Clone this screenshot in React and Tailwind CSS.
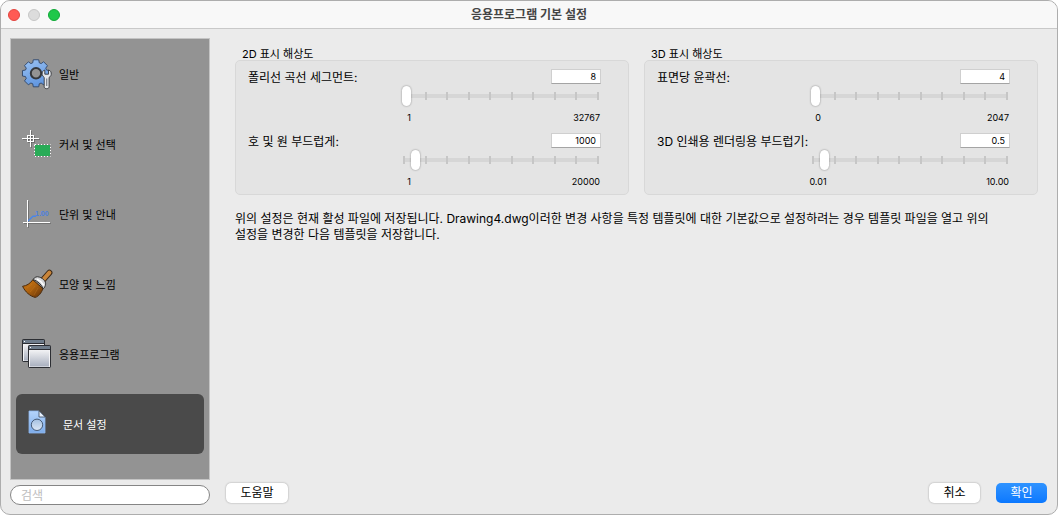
import React, { useState } from 'react'
import clsx from 'clsx'

// Path roda gigi dengan 8 gigi
function gearPath(cx, cy, root, tip) {
  const pts = []
  for (let i = 0; i < 8; i++) {
    const base = (i * Math.PI) / 4 - Math.PI / 2
    const corners = [[-0.3, root], [-0.2, tip], [0.2, tip], [0.3, root]]
    corners.forEach(([d, r]) => {
      pts.push(`${(cx + r * Math.cos(base + d)).toFixed(2)} ${(cy + r * Math.sin(base + d)).toFixed(2)}`)
    })
  }
  return `M${pts.join('L')}Z`
}

const GEAR = gearPath(15, 15.3, 11, 13.8)

function GearIcon() {
  return (
    <svg viewBox="0 0 32 32" className="size-8 shrink-0" aria-hidden="true">
      <defs>
        <linearGradient id="gear" x1="0" y1="0" x2="0.4" y2="1">
          <stop offset="0" stopColor="#9cc3f3" />
          <stop offset="1" stopColor="#6297e0" />
        </linearGradient>
      </defs>
      <path
        d={`${GEAR}M19.6 15.3a4.6 4.6 0 1 0 -9.2 0a4.6 4.6 0 1 0 9.2 0Z`}
        fill="url(#gear)"
        fillRule="evenodd"
        stroke="#2f4568"
        strokeWidth="0.9"
        strokeLinejoin="round"
      />
      <circle cx="15" cy="15.3" r="5.2" fill="#939393" stroke="#35383d" strokeWidth="2" />
      <path
        d="M23.8 12C21.7 12.6 20.9 14.3 21.2 16.4C21.4 17.8 22.2 18.7 23.2 19.4V28.6C23.2 31.4 28.1 31.4 28.1 28.6V19.4C29.3 18.7 30 17.8 30.2 16.4C30.5 14.3 29.6 12.6 27.5 12V16.2H23.8Z"
        fill="#e3e6ea"
        stroke="#34373c"
        strokeWidth="0.9"
        strokeLinejoin="round"
      />
      <path d="M25.7 20.5V28" stroke="#777d87" strokeWidth="1.2" />
    </svg>
  )
}

function CursorIcon() {
  return (
    <svg viewBox="0 0 32 32" className="size-8 shrink-0" aria-hidden="true">
      <g fill="none" stroke="#333" strokeOpacity="0.35">
        <path d="M10.5 3V20M2 11.5H19" />
        <rect x="7.5" y="8.5" width="6" height="6" />
      </g>
      <g fill="none" stroke="#fff">
        <path d="M9.5 2V19M1 10.5H18" />
        <rect x="6.5" y="7.5" width="6" height="6" />
      </g>
      <rect x="13.5" y="16.5" width="16" height="12" fill="#29ab57" stroke="#222" />
      <rect x="13.5" y="16.5" width="16" height="12" fill="none" stroke="#fff" strokeDasharray="2 1" />
    </svg>
  )
}

function UnitsIcon() {
  return (
    <svg viewBox="0 0 32 32" className="size-8 shrink-0" aria-hidden="true">
      <path d="M7.5 3V30M3 25.5H30" stroke="#444" strokeOpacity="0.4" />
      <path d="M7 23L12 18.2H15" fill="none" stroke="#4a86e8" strokeWidth="1.4" />
      <text x="14" y="18" fontSize="7" fontWeight="700" fontFamily="Liberation Sans, sans-serif" fill="#4a80e0">
        1.00
      </text>
      <path d="M6.5 2V29M2 24.5H29" stroke="#fff" />
    </svg>
  )
}

function BrushIcon() {
  return (
    <svg viewBox="0 0 32 32" className="size-8 shrink-0" aria-hidden="true">
      <defs>
        <linearGradient id="brush" x1="0" y1="0" x2="1" y2="1">
          <stop offset="0" stopColor="#d07a14" />
          <stop offset="0.45" stopColor="#b06410" />
          <stop offset="1" stopColor="#5e2f08" />
        </linearGradient>
      </defs>
      <path d="M28.4 4.7L21.5 12.4" stroke="#3c2a18" strokeWidth="6" strokeLinecap="round" />
      <path d="M28.4 4.7L21.2 12.8" stroke="#c9853a" strokeWidth="4" strokeLinecap="round" />
      <path
        d="M11.8 11.8C9.2 15.5 5.5 17.9 1.6 18.3C4.2 23.8 9 28.3 14.2 29.4C17.6 28.6 20.3 25 22 20.6Z"
        fill="url(#brush)"
        stroke="#4a2a0c"
        strokeLinejoin="round"
      />
      <path
        d="M12 11.5C13.4 9.2 16 8 18.6 9.2C22.2 10.5 25 13.5 24.6 16.2C24.4 18.2 23.4 19.8 22.2 20.8C20.6 16.6 16.6 12.8 12 11.5Z"
        fill="#d5d6d8"
        stroke="#333"
        strokeLinejoin="round"
      />
      <path d="M16 11.2C18.8 12.4 21.4 14.8 22.8 17.4" fill="none" stroke="#fff" strokeWidth="1.4" />
      <path d="M11 16L6 20M14 18L9 24M17 20L13 27" stroke="#d88a2c" strokeOpacity="0.25" />
    </svg>
  )
}

function WindowShape({ x, y }) {
  return (
    <g>
      <rect x={x + 0.5} y={y + 0.5} width="22" height="22" rx="0.6" fill="#f4f4f6" stroke="#2c2e33" />
      <rect x={x + 2} y={y + 5} width="19" height="16.5" fill="url(#pane)" />
      <rect x={x + 1} y={y + 1} width="21" height="3" fill="#6e7c8b" />
      <path d={`M${x + 1} ${y + 4.5}h21`} stroke="#2c2e33" />
      <path d={`M${x + 2} ${y + 2.5}h1`} stroke="#fff" />
    </g>
  )
}

function WindowsIcon() {
  return (
    <svg viewBox="0 0 32 32" className="size-8 shrink-0" aria-hidden="true">
      <defs>
        <linearGradient id="pane" x1="0" y1="0" x2="0" y2="1">
          <stop offset="0" stopColor="#f3f3f5" />
          <stop offset="1" stopColor="#a9b0bf" />
        </linearGradient>
      </defs>
      <WindowShape x={1} y={1} />
      <WindowShape x={7} y={7} />
    </svg>
  )
}

function DocumentIcon() {
  return (
    <svg viewBox="0 0 32 32" className="size-8 shrink-0" aria-hidden="true">
      <defs>
        <linearGradient id="doc" x1="0" y1="0" x2="0" y2="1">
          <stop offset="0" stopColor="#b4d4fb" />
          <stop offset="1" stopColor="#7dacea" />
        </linearGradient>
        <linearGradient id="disc" x1="0" y1="0" x2="0" y2="1">
          <stop offset="0" stopColor="#a3bfe0" />
          <stop offset="1" stopColor="#dde8f5" />
        </linearGradient>
      </defs>
      <path d="M4 3H14L20 9V25H4Z" fill="url(#doc)" stroke="#8fb8ee" strokeWidth="0.8" />
      <path d="M14 2.8V9H20.2Z" fill="#e8f1fc" stroke="#3c4a5c" strokeWidth="0.8" />
      <circle cx="12" cy="16.8" r="5.7" fill="url(#disc)" stroke="#465a75" />
    </svg>
  )
}

const MENU = [
  { id: 'general', label: '일반', Icon: GearIcon },
  { id: 'cursor', label: '커서 및 선택', Icon: CursorIcon },
  { id: 'units', label: '단위 및 안내', Icon: UnitsIcon },
  { id: 'look', label: '모양 및 느낌', Icon: BrushIcon },
  { id: 'app', label: '응용프로그램', Icon: WindowsIcon },
  { id: 'document', label: '문서 설정', Icon: DocumentIcon },
]

const GROUPS = [
  {
    title: '2D 표시 해상도',
    fields: [
      { id: 'polyline', label: '폴리선 곡선 세그먼트:', min: '1', max: '32767', value: '8', step: 1 },
      { id: 'arc', label: '호 및 원 부드럽게:', min: '1', max: '20000', value: '1000', step: 1 },
    ],
  },
  {
    title: '3D 표시 해상도',
    fields: [
      { id: 'contour', label: '표면당 윤곽선:', min: '0', max: '2047', value: '4', step: 1 },
      { id: 'render', label: '3D 인쇄용 렌더링용 부드럽기:', min: '0.01', max: '10.00', value: '0.5', step: 0.01 },
    ],
  },
]

function SliderField({ field }) {
  const [value, setValue] = useState(field.value)

  return (
    <div>
      <div className="flex h-[15px] items-center justify-between">
        <label htmlFor={field.id} className="pt-0.5 text-xs whitespace-nowrap">
          {field.label}
        </label>
        <input
          id={field.id}
          type="text"
          value={value}
          onChange={(e) => setValue(e.target.value)}
          className="h-[15px] w-[50px] shrink-0 border border-[#cfcfcf] border-b-[#a4a4a4] bg-white px-1 text-right text-[9px] leading-3 outline-none"
        />
      </div>
      <div className="mt-0.5 ml-auto w-[200px]">
        <div className="grid h-5 items-center px-px">
          <div className="col-start-1 row-start-1 mx-0.5 h-1 bg-[#d6d6d6]" />
          <div className="col-start-1 row-start-1 mx-px flex justify-between">
            {Array.from({ length: 10 }, (_, i) => (
              <span key={i} className="h-2 w-0.5 bg-[#c6c6c6]" />
            ))}
          </div>
          <input
            type="range"
            aria-label={field.label}
            min={field.min}
            max={field.max}
            step={field.step}
            value={value}
            onChange={(e) => setValue(e.target.value)}
            className="col-start-1 row-start-1 h-5 w-full appearance-none bg-transparent outline-none [&::-webkit-slider-thumb]:h-5 [&::-webkit-slider-thumb]:w-[9px] [&::-webkit-slider-thumb]:appearance-none [&::-webkit-slider-thumb]:rounded-full [&::-webkit-slider-thumb]:bg-white [&::-webkit-slider-thumb]:shadow-[0_0_2px_rgba(0,0,0,0.45)]"
          />
        </div>
        <div className="mt-[7px] flex justify-between pr-px text-[9px] leading-[10px]">
          <span className="flex w-4 justify-center">{field.min}</span>
          <span>{field.max}</span>
        </div>
      </div>
    </div>
  )
}

export default function App() {
  const [active, setActive] = useState('document')

  return (
    <div className="flex min-h-screen flex-col overflow-hidden rounded-[10px] border border-[#adadad] bg-[#ebebeb] font-['Inter','Noto_Sans_CJK_KR',sans-serif] text-black">
      {/* Title bar */}
      <header className="grid h-7 grid-cols-[1fr_auto_1fr] items-center border-b border-[#c9c9c9] bg-[#f8f8f8] px-[7px]">
        <div className="flex gap-2">
          <button aria-label="닫기" className="size-3 rounded-full border border-[#e2453f] bg-[#ff5b54]" />
          <button aria-label="최소화" className="size-3 rounded-full border border-[#c6c6c6] bg-[#dcdcdc]" />
          <button aria-label="확대" className="size-3 rounded-full border border-[#10a937] bg-[#1fc84a]" />
        </div>
        <h1 className="text-xs font-bold text-[#454545]">응용프로그램 기본 설정</h1>
      </header>

      <div className="flex flex-1 pt-[9px] pr-[10px] pb-[9px] pl-[9px]">
        {/* Sidebar */}
        <aside className="flex w-[200px] shrink-0 flex-col gap-[5px]">
          <nav className="flex-1 border border-[#c4c4c4] bg-[#939393] px-[5px]">
            {MENU.map(({ id, label, Icon }) => (
              <div key={id} className="py-[5px]">
                <button
                  onClick={() => setActive(id)}
                  className={clsx(
                    'flex h-[60px] w-full items-center gap-1.5 rounded-md text-[11px]',
                    active === id ? 'bg-[#4a4a4a] pl-[9px] text-white' : 'pl-[5px] text-black'
                  )}
                >
                  <Icon />
                  <span className="pt-0.5">{label}</span>
                </button>
              </div>
            ))}
          </nav>
          <input
            type="search"
            aria-label="검색"
            placeholder="검색"
            className="h-5 w-full rounded-full border border-[#858585] bg-white px-2.5 text-xs outline-none placeholder:text-[#bdbdbd]"
          />
        </aside>

        {/* Isi pengaturan */}
        <main className="flex min-w-0 flex-1 flex-col pl-4">
          <div className="flex-1 px-[9px] pt-[10px]">
            <div className="flex gap-[15px]">
              {GROUPS.map((group) => (
                <fieldset key={group.title} className="min-w-0 flex-1">
                  <legend className="h-3 px-[7px] text-[11px] leading-3">{group.title}</legend>
                  <div className="flex flex-col gap-[10px] rounded-[5px] border border-[#d8d8d8] bg-[#e4e4e4] pt-2 pr-[27px] pb-[7px] pl-3">
                    {group.fields.map((field) => (
                      <SliderField key={field.id} field={field} />
                    ))}
                  </div>
                </fieldset>
              ))}
            </div>
            <p className="mt-4 pr-5 text-xs leading-4 break-keep">
              위의 설정은 현재 활성 파일에 저장됩니다. Drawing4.dwg이러한 변경 사항을 특정 템플릿에 대한 기본값으로 설정하려는 경우 템플릿 파일을 열고 위의 설정을 변경한 다음 템플릿을 저장합니다.
            </p>
          </div>

          {/* Footer */}
          <footer className="flex items-center pb-0.5 text-xs">
            <button className="h-5 w-[62px] rounded-[5px] bg-white shadow-[0_0_2px_rgba(0,0,0,0.35)]">도움말</button>
            <div className="ml-auto flex gap-4">
              <button className="h-5 w-[51px] rounded-[5px] bg-white shadow-[0_0_2px_rgba(0,0,0,0.35)]">취소</button>
              <button className="h-5 w-[51px] rounded-[5px] bg-linear-to-b from-[#2f93ff] to-[#0a78ff] text-white">확인</button>
            </div>
          </footer>
        </main>
      </div>
    </div>
  )
}
